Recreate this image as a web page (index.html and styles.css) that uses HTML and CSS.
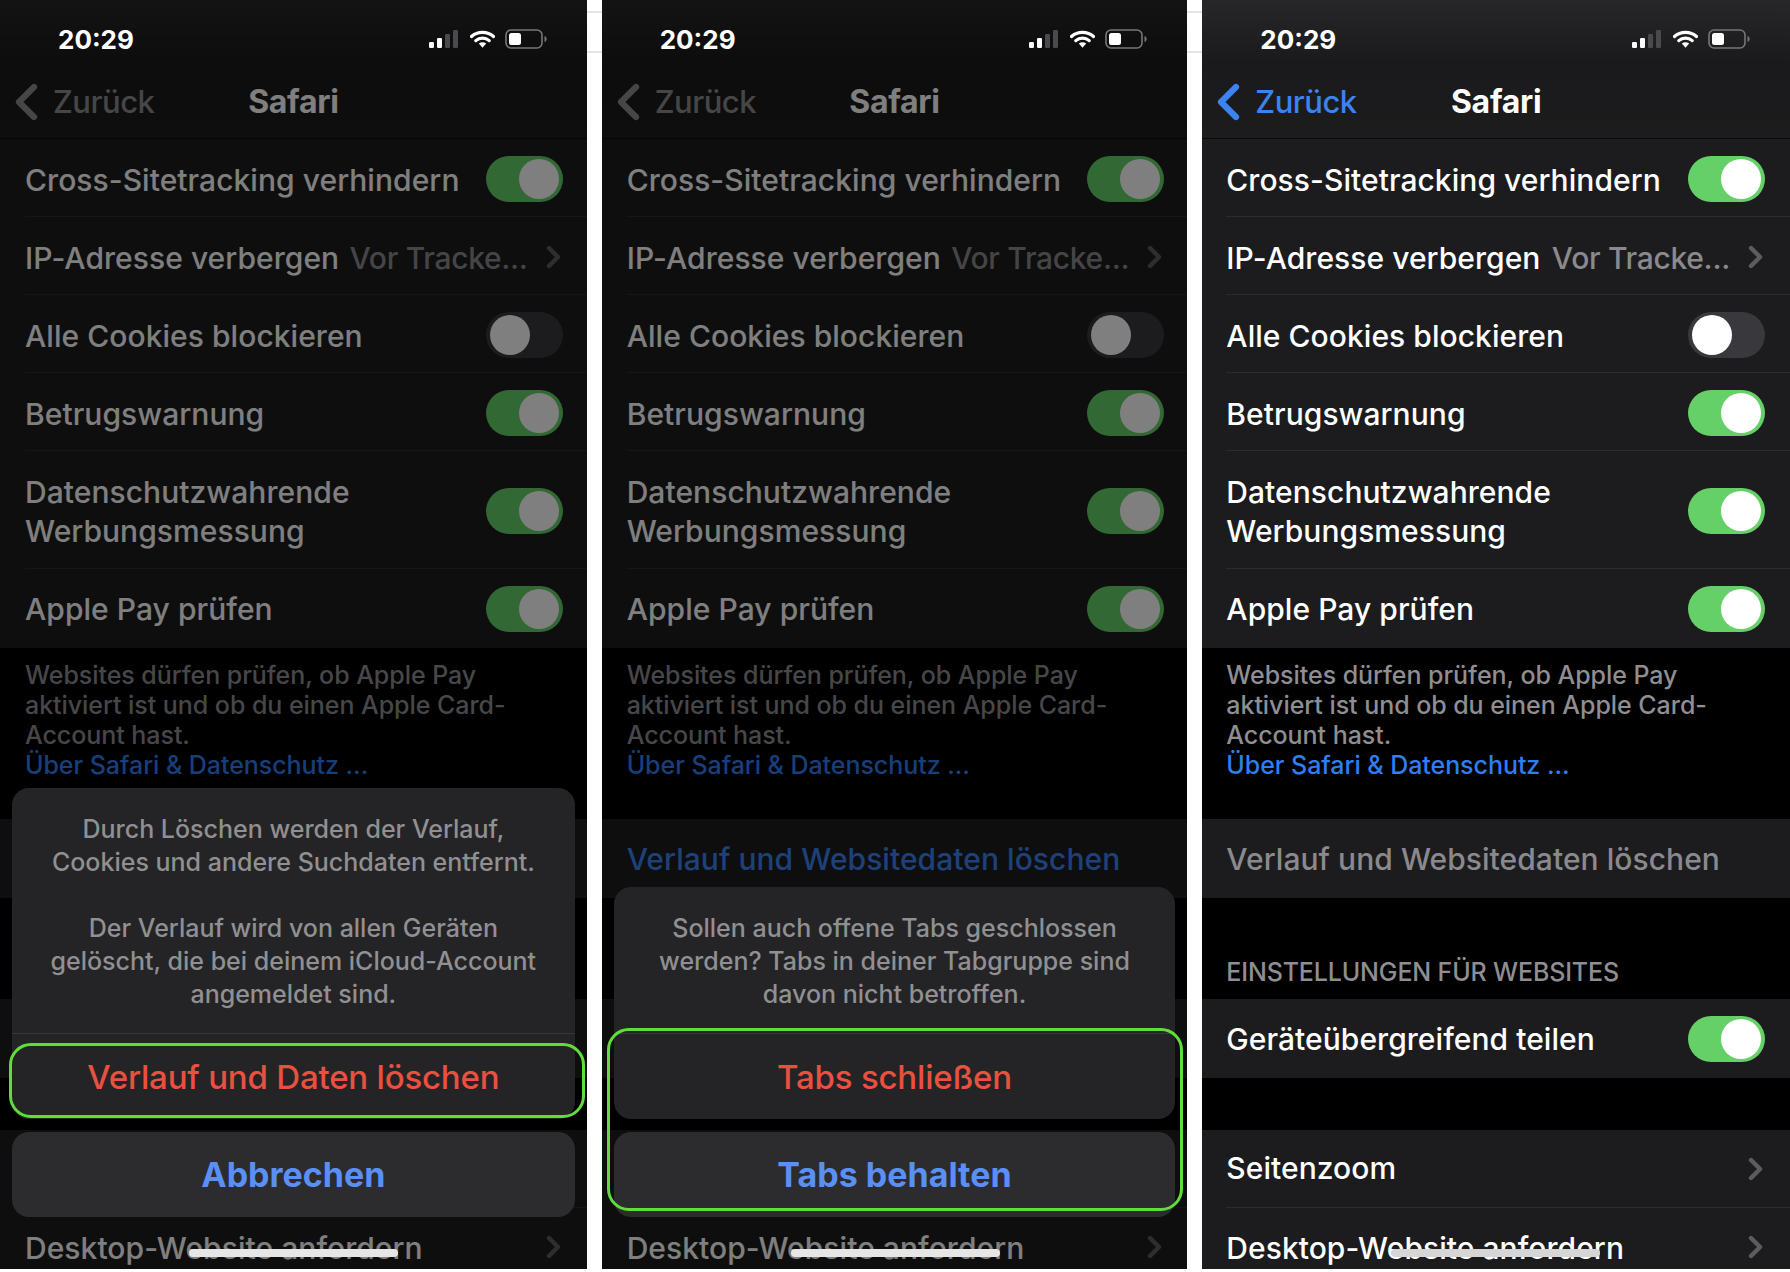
FILE: index.html
```html
<!DOCTYPE html>
<html lang="de">
<head>
    <meta charset="UTF-8">
    <title>Safari Einstellungen</title>
    <link rel="stylesheet" href="styles.css">
</head>
<body>
    <svg class="defs" width="0" height="0">
        <symbol id="signal" viewBox="0 0 29 18">
            <rect x="0" y="12" width="5" height="6" rx="1.2" fill="#fff"/>
            <rect x="8" y="8" width="5" height="10" rx="1.2" fill="#fff"/>
            <rect x="16" y="4" width="5" height="14" rx="1.2" fill="#4a4a4c"/>
            <rect x="24" y="0" width="5" height="18" rx="1.2" fill="#4a4a4c"/>
        </symbol>
        <symbol id="wifi" viewBox="0 0 25 18">
            <path d="M1.5 6.5C7.5 1 17.5 1 23.5 6.5" fill="none" stroke="#fff" stroke-width="3.2" stroke-linecap="round"/>
            <path d="M5.8 10.6C9.6 7.2 15.4 7.2 19.2 10.6" fill="none" stroke="#fff" stroke-width="3.2" stroke-linecap="round"/>
            <path d="M8.8 13.4C11 11.7 14 11.7 16.2 13.4L12.5 17.8Z" fill="#fff"/>
        </symbol>
        <symbol id="battery" viewBox="0 0 42 20">
            <rect x="1" y="1" width="36" height="18" rx="5" fill="none" stroke="#77777a" stroke-width="1.6"/>
            <rect x="4" y="4" width="12" height="12" rx="2.5" fill="#fff"/>
            <path d="M39.5 7C41 7.6 41.6 8.8 41.6 10S41 12.4 39.5 13Z" fill="#77777a"/>
        </symbol>
        <symbol id="chev" viewBox="0 0 15 24">
            <path d="M3 3L12 12L3 21" fill="none" stroke="currentColor" stroke-width="4.4" stroke-linecap="round" stroke-linejoin="round"/>
        </symbol>
        <symbol id="back" viewBox="0 0 24 38">
            <path d="M20 4L5 19L20 34" fill="none" stroke="currentColor" stroke-width="6.2" stroke-linecap="round" stroke-linejoin="round"/>
        </symbol>
    </svg>

    <div class="shot">
        <!-- left: history dialog -->
        <section class="phone phone-a">
            <div class="top">
                <div class="status">
                    <span class="time">20:29</span>
                    <div class="status-icons">
                        <svg class="ic-signal"><use href="#signal"/></svg>
                        <svg class="ic-wifi"><use href="#wifi"/></svg>
                        <svg class="ic-battery"><use href="#battery"/></svg>
                    </div>
                </div>
                <div class="nav">
                    <a class="back"><svg class="ic-back"><use href="#back"/></svg>Zurück</a>
                    <h1>Safari</h1>
                </div>
            </div>
            <div class="group">
                <div class="row"><span class="label">Cross-Sitetracking verhindern</span><span class="toggle on"><i></i></span></div>
                <div class="row"><span class="label">IP-Adresse verbergen</span><span class="value">Vor Tracke...</span><svg class="ic-chev"><use href="#chev"/></svg></div>
                <div class="row"><span class="label">Alle Cookies blockieren</span><span class="toggle"><i></i></span></div>
                <div class="row"><span class="label">Betrugswarnung</span><span class="toggle on"><i></i></span></div>
                <div class="row row-tall"><span class="label">Datenschutzwahrende<br>Werbungsmessung</span><span class="toggle on"><i></i></span></div>
                <div class="row"><span class="label">Apple Pay prüfen</span><span class="toggle on"><i></i></span></div>
            </div>
            <p class="note">Websites dürfen prüfen, ob Apple Pay<br>aktiviert ist und ob du einen Apple Card-<br>Account hast.<br><a>Über Safari &amp; Datenschutz ...</a></p>
            <div class="group">
                <div class="row row-link"><span class="label">Verlauf und Websitedaten löschen</span></div>
            </div>
            <h2 class="section-title">EINSTELLUNGEN FÜR WEBSITES</h2>
            <div class="group">
                <div class="row"><span class="label">Geräteübergreifend teilen</span><span class="toggle on"><i></i></span></div>
            </div>
            <div class="group group-last">
                <div class="row"><span class="label">Seitenzoom</span><svg class="ic-chev auto"><use href="#chev"/></svg></div>
                <div class="row"><span class="label">Desktop-Website anfordern</span><svg class="ic-chev auto"><use href="#chev"/></svg></div>
            </div>
            <div class="dim"></div>
            <div class="sheet">
                <div class="sheet-card">
                    <p class="sheet-msg">Durch Löschen werden der Verlauf,<br>Cookies und andere Suchdaten entfernt.<br><br>Der Verlauf wird von allen Geräten<br>gelöscht, die bei deinem iCloud-Account<br>angemeldet sind.</p>
                    <div class="sheet-btn danger">Verlauf und Daten löschen</div>
                </div>
                <div class="sheet-cancel">Abbrechen</div>
            </div>
            <div class="mark mark-a"></div>
            <div class="home"></div>
        </section>

        <div class="gutter"></div>

        <!-- middle: tabs dialog -->
        <section class="phone phone-b">
            <div class="top">
                <div class="status">
                    <span class="time">20:29</span>
                    <div class="status-icons">
                        <svg class="ic-signal"><use href="#signal"/></svg>
                        <svg class="ic-wifi"><use href="#wifi"/></svg>
                        <svg class="ic-battery"><use href="#battery"/></svg>
                    </div>
                </div>
                <div class="nav">
                    <a class="back"><svg class="ic-back"><use href="#back"/></svg>Zurück</a>
                    <h1>Safari</h1>
                </div>
            </div>
            <div class="group">
                <div class="row"><span class="label">Cross-Sitetracking verhindern</span><span class="toggle on"><i></i></span></div>
                <div class="row"><span class="label">IP-Adresse verbergen</span><span class="value">Vor Tracke...</span><svg class="ic-chev"><use href="#chev"/></svg></div>
                <div class="row"><span class="label">Alle Cookies blockieren</span><span class="toggle"><i></i></span></div>
                <div class="row"><span class="label">Betrugswarnung</span><span class="toggle on"><i></i></span></div>
                <div class="row row-tall"><span class="label">Datenschutzwahrende<br>Werbungsmessung</span><span class="toggle on"><i></i></span></div>
                <div class="row"><span class="label">Apple Pay prüfen</span><span class="toggle on"><i></i></span></div>
            </div>
            <p class="note">Websites dürfen prüfen, ob Apple Pay<br>aktiviert ist und ob du einen Apple Card-<br>Account hast.<br><a>Über Safari &amp; Datenschutz ...</a></p>
            <div class="group">
                <div class="row row-link active"><span class="label">Verlauf und Websitedaten löschen</span></div>
            </div>
            <h2 class="section-title">EINSTELLUNGEN FÜR WEBSITES</h2>
            <div class="group">
                <div class="row"><span class="label">Geräteübergreifend teilen</span><span class="toggle on"><i></i></span></div>
            </div>
            <div class="group group-last">
                <div class="row"><span class="label">Seitenzoom</span><svg class="ic-chev auto"><use href="#chev"/></svg></div>
                <div class="row"><span class="label">Desktop-Website anfordern</span><svg class="ic-chev auto"><use href="#chev"/></svg></div>
            </div>
            <div class="dim"></div>
            <div class="sheet">
                <div class="sheet-card">
                    <p class="sheet-msg">Sollen auch offene Tabs geschlossen<br>werden? Tabs in deiner Tabgruppe sind<br>davon nicht betroffen.</p>
                    <div class="sheet-btn danger">Tabs schließen</div>
                </div>
                <div class="sheet-cancel">Tabs behalten</div>
            </div>
            <div class="mark mark-b"></div>
            <div class="home"></div>
        </section>

        <div class="gutter"></div>

        <!-- right: settings without dialog -->
        <section class="phone phone-c">
            <div class="top">
                <div class="status">
                    <span class="time">20:29</span>
                    <div class="status-icons">
                        <svg class="ic-signal"><use href="#signal"/></svg>
                        <svg class="ic-wifi"><use href="#wifi"/></svg>
                        <svg class="ic-battery"><use href="#battery"/></svg>
                    </div>
                </div>
                <div class="nav">
                    <a class="back"><svg class="ic-back"><use href="#back"/></svg>Zurück</a>
                    <h1>Safari</h1>
                </div>
            </div>
            <div class="group">
                <div class="row"><span class="label">Cross-Sitetracking verhindern</span><span class="toggle on"><i></i></span></div>
                <div class="row"><span class="label">IP-Adresse verbergen</span><span class="value">Vor Tracke...</span><svg class="ic-chev"><use href="#chev"/></svg></div>
                <div class="row"><span class="label">Alle Cookies blockieren</span><span class="toggle"><i></i></span></div>
                <div class="row"><span class="label">Betrugswarnung</span><span class="toggle on"><i></i></span></div>
                <div class="row row-tall"><span class="label">Datenschutzwahrende<br>Werbungsmessung</span><span class="toggle on"><i></i></span></div>
                <div class="row"><span class="label">Apple Pay prüfen</span><span class="toggle on"><i></i></span></div>
            </div>
            <p class="note">Websites dürfen prüfen, ob Apple Pay<br>aktiviert ist und ob du einen Apple Card-<br>Account hast.<br><a>Über Safari &amp; Datenschutz ...</a></p>
            <div class="group">
                <div class="row row-link"><span class="label">Verlauf und Websitedaten löschen</span></div>
            </div>
            <h2 class="section-title">EINSTELLUNGEN FÜR WEBSITES</h2>
            <div class="group">
                <div class="row"><span class="label">Geräteübergreifend teilen</span><span class="toggle on"><i></i></span></div>
            </div>
            <div class="group group-last">
                <div class="row"><span class="label">Seitenzoom</span><svg class="ic-chev auto"><use href="#chev"/></svg></div>
                <div class="row"><span class="label">Desktop-Website anfordern</span><svg class="ic-chev auto"><use href="#chev"/></svg></div>
            </div>
            <div class="home home-light"></div>
        </section>
    </div>
</body>
</html>
```
FILE: styles.css
```css
* {
    box-sizing: border-box;
}

body {
    margin: 0;
    background: #fff;
    font-family: 'Inter', 'Noto Sans', sans-serif;
    overflow: hidden;
}

.defs {
    position: absolute;
}

.shot {
    display: flex;
    height: 1269px;
}

.gutter {
    width: 15px;
    height: 42px;
    margin-top: 11px;
    border-top: 2px solid #e3e5e9;
    border-bottom: 2px solid #e3e5e9;
}

.phone {
    position: relative;
    width: 587px;
    overflow: hidden;
    background: #000;
    color: #fff;
}

.phone-b {
    width: 586px;
}

.phone-c {
    width: 588px;
}

/* status bar + nav */
.top {
    background: linear-gradient(#272729, #1a1a1c 45%, #1c1c1d);
    border-bottom: 1px solid #0a0a0a;
}

.status {
    position: relative;
    z-index: 2;
    height: 78px;
    padding: 0 40px 0 58px;
    display: flex;
    align-items: center;
    justify-content: space-between;
}

.time {
    font-size: 26px;
    font-weight: 700;
}

.status-icons {
    display: flex;
    align-items: center;
}

.ic-signal {
    width: 29px;
    height: 18px;
    margin-right: 12px;
}

.ic-wifi {
    width: 25px;
    height: 18px;
    margin-right: 10px;
}

.ic-battery {
    width: 42px;
    height: 20px;
}

.nav {
    position: relative;
    height: 60px;
    padding: 0 0 13px 14px;
    display: flex;
    align-items: center;
}

.nav h1 {
    position: absolute;
    left: 0;
    right: 0;
    top: 6px;
    margin: 0;
    text-align: center;
    font-size: 32px;
    line-height: 36px;
    font-weight: 700;
    letter-spacing: -0.3px;
}

.back {
    display: flex;
    align-items: center;
    gap: 15px;
    color: #3a83f1;
    font-size: 31px;
    font-weight: 500;
    letter-spacing: -0.5px;
}

.phone-a .back,
.phone-b .back {
    color: #8c8c8e;
}

.ic-back {
    width: 24px;
    height: 38px;
}

/* settings rows */
.group {
    background: #1c1c1e;
    padding-left: 25px;
}

.phone-c .group {
    padding-left: 24px;
}

.row {
    height: 78px;
    padding: 3px 24px 0 0;
    display: flex;
    align-items: center;
    justify-content: space-between;
    border-bottom: 1px solid #2c2c2e;
}

.phone-b .row {
    padding-right: 23px;
}

.phone-c .row {
    padding-right: 25px;
}

.group .row:last-child {
    border-bottom: none;
    padding-top: 0;
    height: 79px;
}

.row-tall {
    height: 118px;
}

.label {
    padding-top: 2px;
    font-size: 30px;
    line-height: 39px;
    font-weight: 500;
    letter-spacing: 0.05px;
}

.value {
    margin-left: auto;
    margin-right: 18px;
    padding-top: 2px;
    color: #8a8a8e;
    font-size: 30px;
    font-weight: 500;
    letter-spacing: -0.3px;
}

.ic-chev {
    width: 15px;
    height: 24px;
    margin-right: 2px;
    color: #5c5c60;
}

.ic-chev.auto {
    margin-left: auto;
}

.toggle {
    width: 77px;
    height: 46px;
    padding: 3px 4px;
    border-radius: 23px;
    background: #39393d;
    display: flex;
}

.toggle.on {
    background: #65d068;
    justify-content: flex-end;
}

.toggle i {
    width: 40px;
    height: 40px;
    border-radius: 50%;
    background: #fff;
}

.note {
    margin: 0;
    padding: 12px 25px 39px;
    height: 171px;
    color: #8e8e93;
    font-size: 25px;
    line-height: 30px;
    font-weight: 500;
    letter-spacing: -0.05px;
}

.note a {
    color: #2f7ef5;
}

.row-link .label {
    color: #8a8a8e;
}

.row-link.active .label {
    color: #3a83f1;
}

.section-title {
    margin: 0;
    height: 101px;
    padding: 60px 25px 0;
    color: #8e8e93;
    font-size: 25px;
    line-height: 28px;
    font-weight: 500;
    letter-spacing: -0.15px;
}

.phone-c .section-title,
.phone-c .note {
    padding-left: 24px;
}

.group-last {
    margin-top: 52px;
}

.group-last .row:first-child {
    padding-top: 0;
}

.group-last .row:first-child .label {
    padding-top: 0;
}

.group-last .row:last-child {
    height: 78px;
}

/* dialogs */
.dim {
    position: absolute;
    inset: 0;
    background: rgba(0, 0, 0, 0.5);
}

.sheet {
    position: absolute;
    left: 12px;
    right: 12px;
    bottom: 52px;
    display: flex;
    flex-direction: column;
    gap: 13px;
    text-align: center;
}

.sheet-card {
    border-radius: 17px;
    background: #242426;
    overflow: hidden;
}

.sheet-msg {
    margin: 0;
    padding: 25px 10px 22px;
    color: #909092;
    font-size: 25px;
    line-height: 33px;
    font-weight: 500;
    border-bottom: 1px solid #38383a;
}

.sheet-btn,
.sheet-cancel {
    height: 85px;
    display: flex;
    align-items: center;
    justify-content: center;
    font-size: 33px;
    font-weight: 500;
    letter-spacing: -0.2px;
}

.danger {
    color: #ea5040;
}

.sheet-cancel {
    border-radius: 17px;
    background: #2c2c2e;
    color: #5a8ff5;
    font-size: 34px;
    font-weight: 700;
    letter-spacing: 0;
}

.mark {
    position: absolute;
    border: 3px solid #60dc3c;
    border-radius: 22px;
}

.mark-a {
    left: 9px;
    top: 1043px;
    width: 576px;
    height: 75px;
}

.mark-b {
    left: 5px;
    top: 1028px;
    width: 576px;
    height: 183px;
}

.home {
    position: absolute;
    left: 189px;
    bottom: 12px;
    width: 209px;
    height: 8px;
    border-radius: 4px;
    background: #e6e6e6;
}

.home-light {
    background: #d6d6d6;
}
```
